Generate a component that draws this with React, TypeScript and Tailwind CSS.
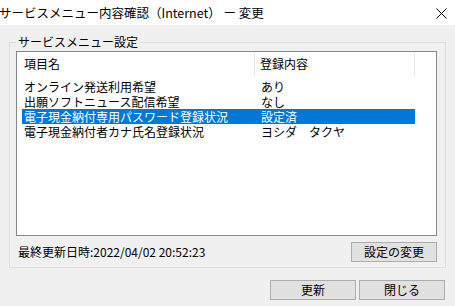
import React from 'react'

const rows = [
  { name: 'オンライン発送利用希望', value: 'あり', selected: false },
  { name: '出願ソフトニュース配信希望', value: 'なし', selected: false },
  { name: '電子現金納付専用パスワード登録状況', value: '設定済', selected: true },
  { name: '電子現金納付者カナ氏名登録状況', value: 'ヨシダ　タクヤ', selected: false },
]

const font = { fontFamily: '"Noto Sans CJK JP", "Noto Sans", sans-serif' }

const WinButton = ({ label, className = '' }: { label: string; className?: string }) => (
  <button className={`h-[20px] bg-[#e1e1e1] border border-[#adadad] text-[12px] leading-[18px] text-black flex items-center justify-center ${className}`}>
    {label}
  </button>
)

const App = () => {
  return (
    <div className="w-[455px] h-[306px] bg-[#f0f0f0] flex flex-col text-black" style={font}>
      {/* Title bar */}
      <div className="h-[25px] bg-white flex items-center justify-between shrink-0">
        <span className="text-[12.5px] leading-[18px] -ml-[1px]">サービスメニュー内容確認（Internet） ー 変更</span>
        <svg width="11" height="11" viewBox="0 0 11 11" className="mr-[8px] mt-[1px]">
          <path d="M0.5 0.5 L10.5 10.5 M10.5 0.5 L0.5 10.5" stroke="#000" strokeWidth="1" />
        </svg>
      </div>

      {/* Group box */}
      <div className="px-[9px] pt-[17px]">
        <div className="relative border border-[#dcdcdc] pl-[6px] pr-[8px] pt-[8px] pb-[5px]">
          <span className="absolute -top-[8px] left-[6px] px-[2px] bg-[#f0f0f0] text-[12px] leading-[14px]">
            サービスメニュー設定
          </span>

          {/* List view */}
          <div className="h-[185px] bg-white border border-[#828790] flex flex-col">
            <div className="h-[24px] flex items-stretch text-[12px]">
              <div className="w-[238px] pl-[7px] flex items-center border-r border-[#e5e5e5]">項目名</div>
              <div className="w-[160px] pl-[5px] flex items-center border-r border-[#e5e5e5]">登録内容</div>
            </div>
            <div className="pt-[3px] pl-[5px] flex flex-col">
              {rows.map((r) => (
                <div
                  key={r.name}
                  className={`h-[15px] w-[393px] flex text-[12px] ${r.selected ? 'bg-[#0078d7] text-white' : ''}`}
                >
                  <div className="w-[233px] h-[15px] overflow-hidden pl-[2px] whitespace-nowrap text-[12px] leading-[15px]">{r.name}</div>
                  <div className="w-[160px] h-[15px] overflow-hidden pl-[6px] whitespace-nowrap text-[12px] leading-[15px]">{r.value}</div>
                </div>
              ))}
            </div>
          </div>

          <div className="mt-[6px] flex items-center justify-between">
            <span className="text-[12px] leading-[16px] pl-[2px]">最終更新日時:2022/04/02 20:52:23</span>
            <WinButton label="設定の変更" className="w-[86px]" />
          </div>
        </div>
      </div>

      {/* Footer buttons */}
      <div className="flex justify-end gap-[3px] pr-[10px] pt-[12px]">
        <WinButton label="更新" className="w-[86px]" />
        <WinButton label="閉じる" className="w-[86px]" />
      </div>
    </div>
  )
}

export default App
